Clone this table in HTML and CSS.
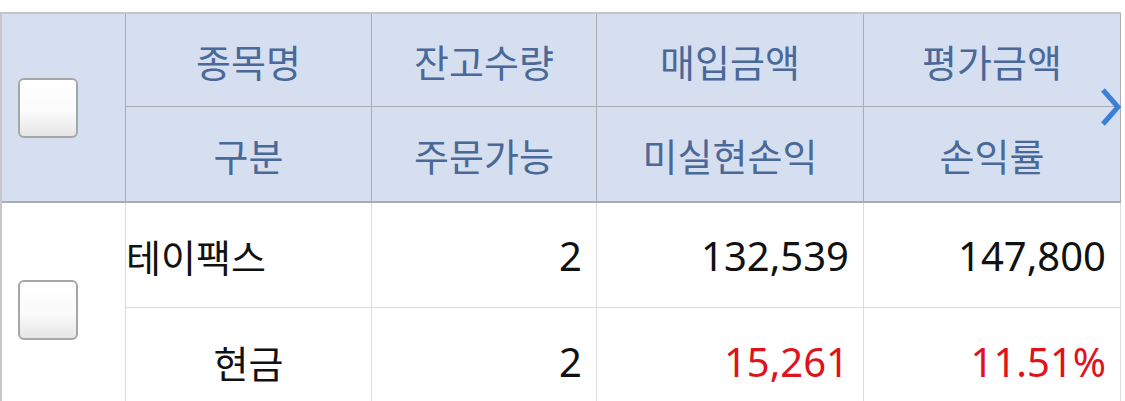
FILE: index.html
```html
<!DOCTYPE html>
<html lang="ko">
<head>
<meta charset="utf-8">
<link rel="stylesheet" href="styles.css">
</head>
<body>
<div class="wrap">
  <div class="grid">
    <div class="hcell chk-cell"><span class="chk"></span></div>
    <div class="hcell r1">종목명</div>
    <div class="hcell r1">잔고수량</div>
    <div class="hcell r1">매입금액</div>
    <div class="hcell r1 last">평가금액</div>
    <div class="hcell r2">구분</div>
    <div class="hcell r2">주문가능</div>
    <div class="hcell r2">미실현손익</div>
    <div class="hcell r2 last">손익률</div>

    <div class="bcell chk-cell body-chk"><span class="chk"></span></div>
    <div class="bcell b1 name">테이팩스</div>
    <div class="bcell b1 num">2</div>
    <div class="bcell b1 num">132,539</div>
    <div class="bcell b1 num last">147,800</div>
    <div class="bcell b2 kind">현금</div>
    <div class="bcell b2 num">2</div>
    <div class="bcell b2 num red">15,261</div>
    <div class="bcell b2 num red last">11.51%</div>
  </div>
  <svg class="chev" width="24" height="40" viewBox="0 0 24 40"><path d="M4 3 L19 20 L4 37" fill="none" stroke="#3b7fd6" stroke-width="5"/></svg>
</div>
</body>
</html>
```
FILE: styles.css
```css
html, body { margin: 0; padding: 0; background: #fff; }
body { font-family: "Noto Sans CJK KR", "Noto Sans", sans-serif; }
.wrap { position: relative; padding-top: 12px; width: 1125px; height: 389px; overflow: hidden; }
.grid {
  display: grid;
  grid-template-columns: 123px 246px 225px 267px 258px;
  grid-template-rows: 93px 96px 105px 106px;
  width: 1119px;
  border-top: 2px solid #c4c6c9;
  border-left: 2px solid #c4c6c9;
}
.hcell {
  background: #d6dfef;
  color: #4a6898;
  font-size: 38px;
  display: flex;
  align-items: center;
  justify-content: center;
  border-left: 1px solid #a9adb2;
  box-sizing: border-box;
}
.hcell.last { border-right: 1px solid #a9adb2; }
.hcell.r1 { border-bottom: 1px solid #a9adb2; }
.hcell.r2 { border-bottom: 2px solid #a9adb2; }
.chk-cell {
  grid-row: span 2;
  border-left: none;
  justify-content: flex-start;
  padding-left: 16px;
}
.hcell.chk-cell { border-bottom: 2px solid #a9adb2; }
.body-chk { padding-top: 2px; }
.chk {
  width: 56px;
  height: 56px;
  border: 2px solid #a6a6a8;
  border-radius: 6px;
  background: linear-gradient(#ffffff 0%, #fbfbfb 55%, #e6e6e6 100%);
  box-sizing: content-box;
}
.bcell {
  background: #fff;
  color: #111;
  display: flex;
  align-items: center;
  border-left: 1px solid #dcdcdc;
  box-sizing: border-box;
  font-size: 38px;
}
.bcell.chk-cell { border-left: none; }
.bcell.last { border-right: 1px solid #dcdcdc; }
.bcell.b1 { border-bottom: 1px solid #dcdcdc; }
.name { justify-content: flex-start; padding-left: 0; }
.kind { justify-content: center; }
.num {
  justify-content: flex-end;
  padding-right: 14px;
  font-family: "Noto Sans", sans-serif;
  font-size: 40px;
}
.red { color: #e0121c; }
.chev { position: absolute; left: 1099px; top: 87px; }
```
